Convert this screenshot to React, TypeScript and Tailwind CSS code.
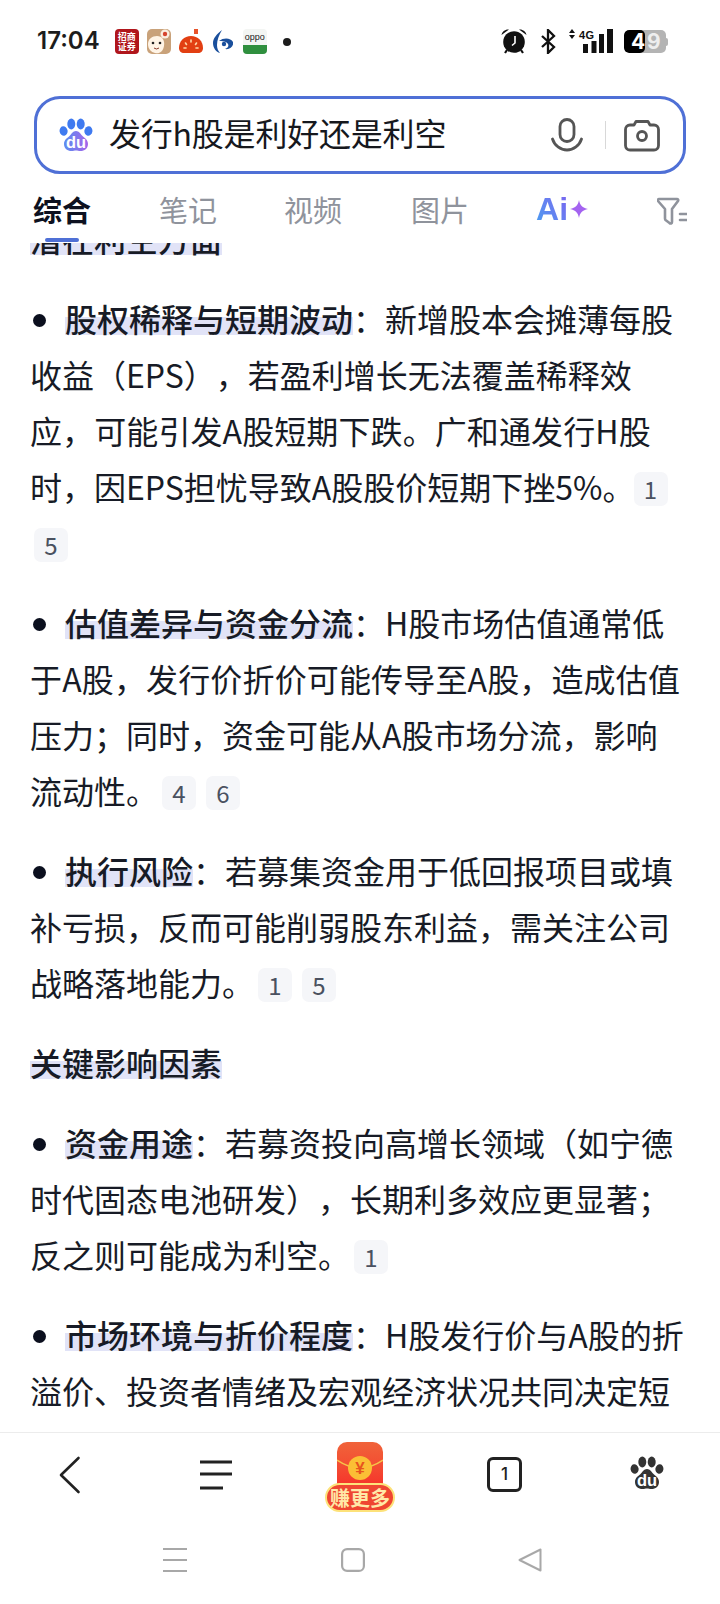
import React from "react";

const FONT = "[font-family:'Noto_Sans_CJK_SC','Noto_Sans',sans-serif]";

function Paw({ palm = "#000", toes = "#000", size = 34, du = "#fff" }: { palm?: string; toes?: string; size?: number; du?: string }) {
  return (
    <svg width={size} height={size} viewBox="0 0 34 34">
      <defs>
        <linearGradient id="pawg" x1="0" y1="0" x2="1" y2="0">
          <stop offset="0" stopColor="#5b8cf0" />
          <stop offset="1" stopColor="#a465ea" />
        </linearGradient>
      </defs>
      <ellipse cx="4.6" cy="13" rx="4" ry="4.8" fill={toes} transform="rotate(-10 4.6 13)" />
      <ellipse cx="12.3" cy="6" rx="4" ry="5.4" fill={toes} />
      <ellipse cx="21.7" cy="6" rx="4" ry="5.4" fill={toes} />
      <ellipse cx="29.4" cy="13" rx="4" ry="4.8" fill={toes} transform="rotate(10 29.4 13)" />
      <path d="M17 13c3 0 4.600 3 6.500 5 2 2 5.500 3.500 5.500 8 0 4.500-3.500 7-7.500 7-2 0-3-.6-4.500-.6S14.500 33 12.500 33C8.500 33 5 30.500 5 26c0-4.500 3.500-6 5.500-8 1.900-2 3.500-5 6.500-5z" fill={palm} />
      <text x="17" y="30" textAnchor="middle" fontSize="16.500" fontWeight="700" fill={du} fontFamily="'Liberation Sans',sans-serif">du</text>
    </svg>
  );
}

function Chip({ n, tight = false }: { n: number; tight?: boolean }) {
  return (
    <span className={tight
      ? "inline-flex h-[34px] w-[34px] items-center justify-center rounded-[7px] bg-[#f5f6f9] align-middle text-[24px] leading-none text-[#4a5160] mr-[10px] relative top-[-2px] -ml-[1px]"
      : "inline-flex h-[34px] w-[34px] items-center justify-center rounded-[7px] bg-[#f5f6f9] align-middle text-[24px] leading-none text-[#4a5160] mr-[6px] relative top-[-2px] ml-[4px]"}>
      {n}
    </span>
  );
}

function Mark({ children }: { children: React.ReactNode }) {
  return <span className="font-medium bg-[linear-gradient(transparent_48%,#e1e3f7_48%,#e1e3f7_88%,transparent_88%)]">{children}</span>;
}

function Dot() {
  return <span className="inline-block h-[13px] w-[13px] rounded-full bg-[#0b0f1e] ml-[3px] mr-[19px] align-middle relative top-[-3px]" />;
}

function Block({ children }: { children: React.ReactNode }) {
  return <div className="mb-[24px] whitespace-nowrap">{children}</div>;
}

function StatusBar() {
  return (
    <div className="relative flex h-[96px] items-start">
      <span className="ml-[37px] mt-[25px] text-[24px] font-semibold leading-[32px] text-[#1c1c1c] [font-family:Inter,sans-serif]">17:04</span>
      <div className="ml-[15px] mt-[29px] flex items-center">
        <div className="flex h-[25px] w-[24px] flex-col items-center justify-center rounded-[4px] bg-[#b0161c] text-[9px] font-bold leading-[10px] text-white">
          <span>招商</span>
          <span>证券</span>
        </div>
        <svg className="ml-[8px]" width="24" height="25" viewBox="0 0 24 25">
          <rect width="24" height="25" rx="5" fill="#c9a27a" />
          <path d="M1 15c0-5 4-8 9-8s8 4 7 10-5 8-9 7-7-4-7-9z" fill="#fff4e6" />
          <circle cx="18" cy="5" r="4.500" fill="#fbeee0" />
          <circle cx="18" cy="5" r="2.200" fill="#d6452e" />
          <circle cx="6" cy="14" r="1.300" fill="#222" />
          <circle cx="13" cy="14" r="1.300" fill="#222" />
          <path d="M7 19q2.500 2 5 0" stroke="#8a3a2a" fill="none" />
        </svg>
        <svg className="ml-[8px]" width="24" height="25" viewBox="0 0 24 25">
          <rect x="15" y="0" width="4" height="5" fill="#e8532a" />
          <path d="M0 19c0-7 5-12 12-12s12 5 12 12c0 3-2 5-5 5H5c-3 0-5-2-5-5z" fill="#e23f12" />
          <g stroke="#ffd9a8" strokeWidth="1.600" strokeLinecap="round">
            <path d="M12 11v2" />
            <path d="M6.500 14l1 1.500" />
            <path d="M17.500 14l-1 1.500" />
            <path d="M5 19h2" />
            <path d="M17 19h2" />
          </g>
        </svg>
        <svg className="ml-[10px]" width="20" height="25" viewBox="0 0 20 25">
          <path d="M9 1C4 5 0 9 0 14c0 5 3 9 7 10-2-2-3-5-3-8 0-5 2-10 5-15z" fill="#1a4f9c" />
          <path d="M6 12c5-4 12-3 14 1 1 4-3 8-8 7 3-1 4-3 3-5-2-3-6-3-9-3z" fill="#1a4f9c" />
          <circle cx="11" cy="15" r="2.200" fill="#1a4f9c" />
        </svg>
        <div className="ml-[10px] flex h-[25px] w-[24px] flex-col overflow-hidden rounded-[4px] bg-[#f3f5f3]">
          <span className="flex h-[16px] items-center justify-center text-[9px] leading-none text-[#222] [font-family:'Liberation_Sans',sans-serif]">oppo</span>
          <span className="h-[9px] w-[24px] bg-[#2f8f3e]" />
        </div>
        <span className="ml-[16px] h-[8px] w-[8px] rounded-full bg-[#1c1c1c]" />
      </div>
      <div className="ml-auto mr-[52px] mt-[28px] flex items-start">
        <svg width="26" height="26" viewBox="0 0 26 26">
          <circle cx="13" cy="14" r="10.800" fill="#111" />
          <path d="M0.500 7c.5-3.500 4-6 7.500-5.500z M25.500 7c-.5-3.500-4-6-7.500-5.500z" fill="#111" />
          <path d="M6 22l-2 3M20 22l2 3" stroke="#111" strokeWidth="2.200" />
          <path d="M14 8v7l-3 2.500" stroke="#fff" strokeWidth="1.600" fill="none" />
        </svg>
        <svg className="ml-[14px] mt-[1px]" width="15" height="25" viewBox="0 0 15 25">
          <path d="M1 7l12 11-6 6V1l6 6L1 18" stroke="#111" strokeWidth="2.300" fill="none" />
        </svg>
        <svg className="ml-[12px] mt-[1px]" width="45" height="25" viewBox="0 0 45 25">
          <path d="M1 4l3-4 3 4zM1 6l3 4 3-4z" fill="#111" />
          <text x="11" y="10" fontSize="11" fontWeight="700" fill="#111" fontFamily="'Liberation Sans',sans-serif" textLength="15">4G</text>
          <rect x="15" y="15" width="5" height="9" fill="#111" />
          <rect x="23.500" y="12" width="5" height="12" fill="#111" />
          <rect x="31" y="5" width="5" height="19" fill="#111" />
          <rect x="39" y="0" width="6" height="24" fill="#111" />
        </svg>
        <div className="relative ml-[11px] mt-[2px] flex h-[23px] w-[42px] overflow-hidden rounded-[5px] bg-[#b4b4b4] text-[21px] font-bold leading-[23px] text-white [font-family:Inter,sans-serif]">
          <span className="w-[21px] rounded-[5px] bg-black pl-[7px]">4</span>
          <span className="pl-[2px] text-[#eeeeee]">9</span>
        </div>
        <span className="mt-[10px] h-[8px] w-[2px] rounded-r-[2px] bg-[#b4b4b4]" />
      </div>
    </div>
  );
}

function SearchBox() {
  return (
    <div className="mx-[34px] flex h-[78px] items-center rounded-[26px] border-[3px] border-[#4f70d6] bg-white">
      <div className="ml-[22px] flex items-center">
        <Paw toes="#3f7af0" palm="url(#pawg)" size={34} />
      </div>
      <span className="mb-[6px] ml-[16px] text-[32px] leading-none tracking-[-0.2px] text-[#16181d]">发行h股是利好还是利空</span>
      <svg className="ml-auto" width="32" height="34" viewBox="0 0 32 34" fill="none" stroke="#555" strokeWidth="2.800" strokeLinecap="round">
        <rect x="9" y="1.500" width="14" height="22" rx="7" />
        <path d="M1.500 21c2 6.500 8 11 14.500 11s12.500-4.500 14.500-11" />
      </svg>
      <span className="ml-[22px] h-[28px] w-[1px] bg-[#d8d8d8]" />
      <svg className="ml-[18px] mr-[23px]" width="36" height="33" viewBox="0 0 36 33" fill="none" stroke="#555" strokeWidth="2.800" strokeLinejoin="round">
        <path d="M10 6l2-3.500h12L26 6h4c2.500 0 4.500 2 4.500 4.500v16c0 2.500-2 4.500-4.500 4.500H6c-2.500 0-4.500-2-4.500-4.500v-16C1.500 8 3.500 6 6 6z" />
        <circle cx="18" cy="17" r="4.500" />
      </svg>
    </div>
  );
}

function Tabs() {
  return (
    <div className="relative z-10 flex h-[69px] items-start bg-white text-[29px] leading-[40px] text-[#8f939c]">
      <div className="ml-[33px] mt-[15px] flex w-[58px] flex-col items-center">
        <span className="font-bold text-[#0d1120]">综合</span>
        <span className="mt-[9px] h-[4px] w-[34px] rounded-full bg-[#4f70d6]" />
      </div>
      <span className="ml-[68px] mt-[15px]">笔记</span>
      <span className="ml-[67px] mt-[15px]">视频</span>
      <span className="ml-[69px] mt-[15px]">图片</span>
      <div className="ml-[67px] mt-[15px] flex h-[40px] items-center">
        <span className="bg-linear-to-tr from-[#3fa0f0] to-[#7a5df0] bg-clip-text text-[32px] font-bold leading-[40px] text-transparent [font-family:'Liberation_Sans',sans-serif]">Ai</span>
        <svg width="18" height="18" viewBox="0 0 16 16" className="ml-[2px]">
          <path d="M8 0c.8 4.500 3 7 8 8-5 1-7.200 3.500-8 8-.8-4.500-3-7-8-8 5-1 7.200-3.500 8-8z" fill="#a463f0" />
        </svg>
      </div>
      <svg className="ml-[69px] mt-[23px]" width="30" height="30" viewBox="0 0 30 30" fill="none" stroke="#8f939c" strokeWidth="2.600" strokeLinejoin="round" strokeLinecap="round">
        <path d="M2 2h18c1 0 1.500 1 1 2l-6 8v13c0 1.500-1.500 2-2.500 1L8.500 23c-.5-.5-.5-1-.5-1.500V12L1 4c-.5-1 0-2 1-2z" />
        <path d="M23 17h7M23 23h7" />
      </svg>
    </div>
  );
}

function Article() {
  return (
    <div className="min-h-0 flex-1 overflow-hidden text-[32px] leading-[56px] text-[#171b26] [text-spacing-trim:space-all]">
      <div className="-mt-[33px] pl-[30px]">
        <Block><Mark>潜在利空方面</Mark></Block>
        <Block>
          <Dot /><Mark>股权稀释与短期波动</Mark>：新增股本会摊薄每股<br />
          收益（EPS），若盈利增长无法覆盖稀释效<br />
          <span className="tracking-[0.1px]">应，可能引发A股短期下跌。广和通发行H股</span><br />
          时，因EPS担忧导致A股股价短期下挫5%。<Chip n={1} tight /><br />
          <Chip n={5} />
        </Block>
        <Block>
          <Dot /><Mark>估值差异与资金分流</Mark>：H股市场估值通常低<br />
          <span className="tracking-[0.15px]">于A股，发行价折价可能传导至A股，造成估值</span><br />
          压力；同时，资金可能从A股市场分流，影响<br />
          流动性。<Chip n={4} /><Chip n={6} />
        </Block>
        <Block>
          <Dot /><Mark>执行风险</Mark>：若募集资金用于低回报项目或填<br />
          补亏损，反而可能削弱股东利益，需关注公司<br />
          战略落地能力。<Chip n={1} /><Chip n={5} />
        </Block>
        <Block><Mark>关键影响因素</Mark></Block>
        <Block>
          <Dot /><Mark>资金用途</Mark>：若募资投向高增长领域（如宁德<br />
          时代固态电池研发），长期利多效应更显著；<br />
          反之则可能成为利空。<Chip n={1} />
        </Block>
        <Block>
          <Dot /><Mark>市场环境与折价程度</Mark>：H股发行价与A股的折<br />
          溢价、投资者情绪及宏观经济状况共同决定短
        </Block>
      </div>
    </div>
  );
}

function RedPacket() {
  return (
    <div className="relative flex h-[72px] w-[72px] flex-col items-center">
      <div className="relative h-[46px] w-[46px] overflow-hidden rounded-t-[10px] bg-linear-to-b from-[#f0633a] to-[#f62f2a]">
        <svg className="absolute left-0 top-0" width="46" height="46" viewBox="0 0 46 46" fill="none">
          <path d="M0 18q12 8 23 8t23-8" stroke="#f6c34a" strokeWidth="1.500" />
          <circle cx="23" cy="26" r="12" fill="#fbbf35" />
          <text x="23" y="32" textAnchor="middle" fontSize="17" fontWeight="700" fill="#e8541e" fontFamily="'Liberation Sans',sans-serif">¥</text>
        </svg>
      </div>
      <div className="absolute top-[41px] flex h-[29px] w-[70px] items-center justify-center rounded-full border-[2px] border-[#fde27a] bg-[#ef4632] text-[20px] font-bold leading-none text-[#ffe9a8]">
        赚更多
      </div>
    </div>
  );
}

function BottomNav() {
  return (
    <div className="flex h-[96px] items-start border-t-[1px] border-[#ececec] bg-white">
      <svg className="ml-[59px] mt-[23px]" width="22" height="38" viewBox="0 0 22 38" fill="none" stroke="#222" strokeWidth="2.600" strokeLinecap="round" strokeLinejoin="round">
        <path d="M19.500 2L2 19l17.500 17" />
      </svg>
      <svg className="ml-[119px] mt-[27px]" width="32" height="30" viewBox="0 0 32 30" fill="none" stroke="#222" strokeWidth="2.800">
        <path d="M0 2h32M0 14h32M0 28h23" />
      </svg>
      <div className="ml-[92px] mt-[9px]"><RedPacket /></div>
      <div className="ml-[91px] mt-[24px] flex h-[35px] w-[35px] items-center justify-center rounded-[6px] border-[3px] border-[#222] text-[17px] font-medium leading-none text-[#222] [font-family:Inter,sans-serif]">1</div>
      <div className="ml-[108px] mt-[23px]"><Paw toes="#333" palm="#333" size={34} /></div>
    </div>
  );
}

function SystemBar() {
  return (
    <div className="flex h-[76px] items-start bg-white">
      <svg className="ml-[163px] mt-[20px]" width="24" height="24" viewBox="0 0 24 24" fill="none" stroke="#a8a8a8" strokeWidth="2.200">
        <path d="M0 1h24M0 12h24M0 23h24" />
      </svg>
      <svg className="ml-[154px] mt-[20px]" width="24" height="24" viewBox="0 0 24 24" fill="none" stroke="#a8a8a8" strokeWidth="2.200">
        <rect x="1.100" y="1.100" width="21.800" height="21.800" rx="5" />
      </svg>
      <svg className="ml-[153px] mt-[20px]" width="24" height="24" viewBox="0 0 24 24" fill="none" stroke="#a8a8a8" strokeWidth="2" strokeLinejoin="round">
        <path d="M22.500 1.500v21L1.500 12z" />
      </svg>
    </div>
  );
}

export default function App() {
  return (
    <div className={`flex h-[1604px] w-[720px] flex-col overflow-hidden bg-white ${FONT}`}>
      <StatusBar />
      <SearchBox />
      <Tabs />
      <Article />
      <BottomNav />
      <SystemBar />
    </div>
  );
}
